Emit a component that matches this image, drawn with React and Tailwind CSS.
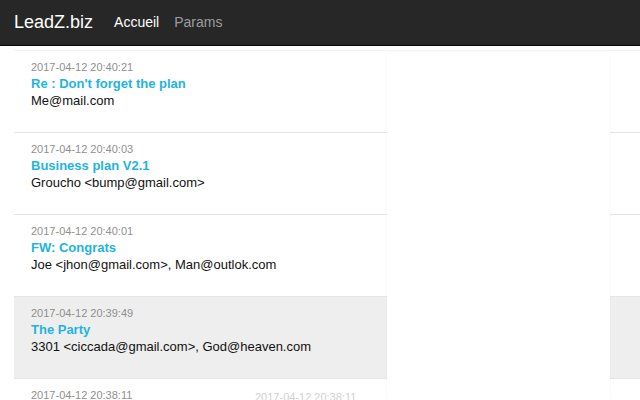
const mails = [
  { date: "2017-04-12 20:40:21", subject: "Re : Don't forget the plan", from: "Me@mail.com" },
  { date: "2017-04-12 20:40:03", subject: "Business plan V2.1", from: "Groucho <bump@gmail.com>" },
  { date: "2017-04-12 20:40:01", subject: "FW: Congrats", from: "Joe <jhon@gmail.com>, Man@outlok.com" },
  { date: "2017-04-12 20:39:49", subject: "The Party", from: "3301 <ciccada@gmail.com>, God@heaven.com", active: true },
  { date: "2017-04-12 20:38:11", subject: "Meeting", from: "Boss <boss@gmail.com>" },
];

export default function App() {
  return (
    <div
      className="relative h-[400px] w-[640px] overflow-hidden bg-white"
      style={{ fontFamily: '"Liberation Sans", Arial, sans-serif' }}
    >
      {/* NAVBAR */}
      <div className="flex h-[46px] items-center border-b border-[#080808] bg-[#272727] px-[14px]">
        <span className="text-[18px] text-white">LeadZ.biz</span>
        <span className="ml-[21px] text-[14px] text-white">Accueil</span>
        <span className="ml-[15px] text-[14px] text-[#9d9d9d]">Params</span>
      </div>

      {/* LIST */}
      <div className="mt-[4px] ml-[14px] border-t border-[#f4f4f4]">
        {mails.map((m) => (
          <div
            key={m.date}
            className={`h-[82px] border-b border-[#e5e5e5] pl-[17px] pt-[8px] ${m.active ? "bg-[#eeeeee]" : "bg-white"}`}
          >
            <p className="text-[11px] leading-[16px] text-[#8f8f8f]">{m.date}</p>
            <p className="text-[13px] font-bold leading-[17px] text-[#1eb4e0]">{m.subject}</p>
            <p className="text-[13px] leading-[17px] text-[#111]">{m.from}</p>
          </div>
        ))}
      </div>

      {/* blank overlay panel */}
      <div className="absolute top-[52px] bottom-0 left-[387px] w-[223px] bg-white shadow-[0_0_2px_rgba(0,0,0,0.05)]" />

      {/* ghost date */}
      <span className="absolute left-[255px] top-[389px] text-[11px] leading-[16px] text-[#d0d0d0]">
        2017-04-12 20:38:11
      </span>
    </div>
  );
}
